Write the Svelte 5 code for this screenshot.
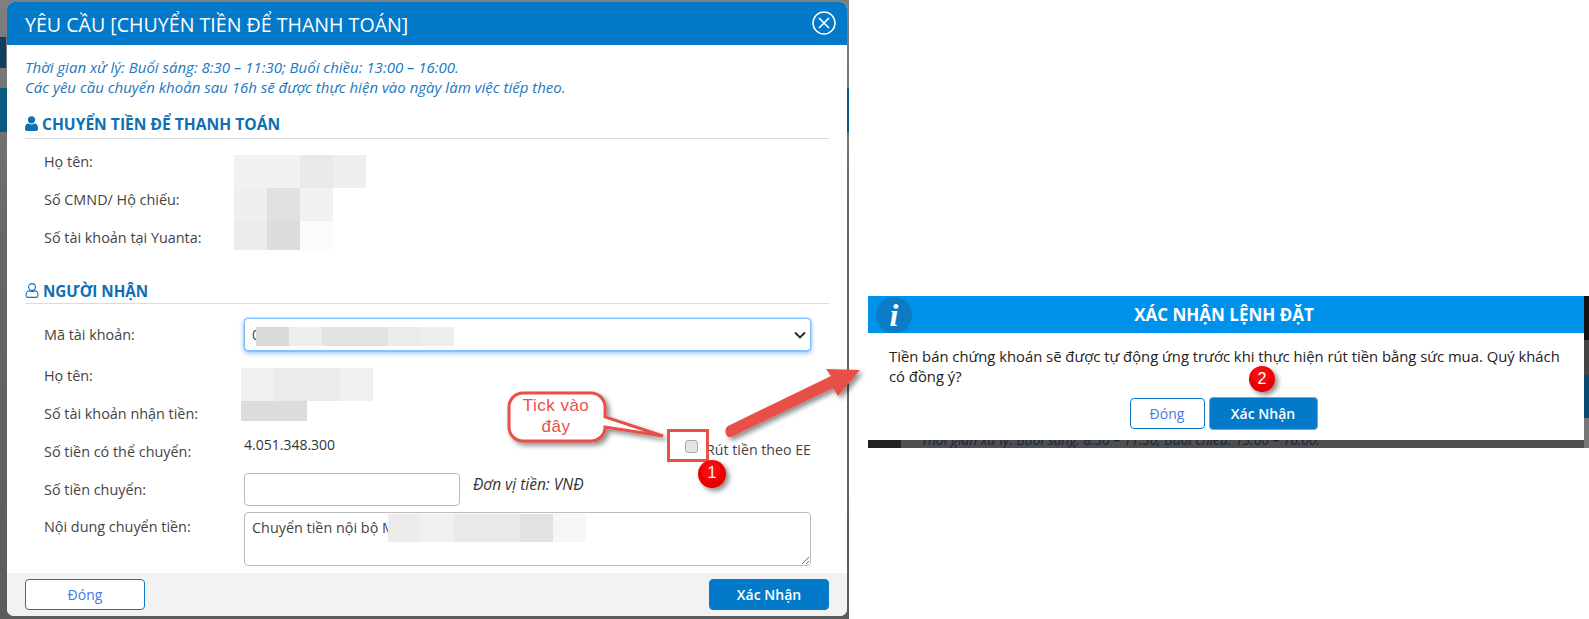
<script>
	const payerRows = ['Họ tên:', 'Số CMND/ Hộ chiếu:', 'Số tài khoản tại Yuanta:'];

	// pixelated patches that hide personal data in the screenshot
	const patches = [
		{ x: 234, y: 155, h: 33, w: 33, cells: ['#f1f1f1', '#f1f1f1', '#e9e9e9', '#eeeeee'] },
		{ x: 234, y: 188, h: 33, w: 33, cells: ['#efefef', '#e0e0e0', '#f1f1f1'] },
		{ x: 234, y: 221, h: 29, w: 33, cells: ['#ececec', '#dcdcdc', '#fbfbfb'] },
		{ x: 256, y: 327, h: 19, w: 33, cells: ['#dadada', '#eeeeee', '#e3e3e3', '#e3e3e3', '#ececec', '#eeeeee'] },
		{ x: 241, y: 368, h: 33, w: 33, cells: ['#f0f0f0', '#ebebeb', '#ebebeb', '#f0f0f0'] },
		{ x: 241, y: 401, h: 20, w: 66, cells: ['#dcdcdc'] },
		{ x: 388, y: 514, h: 28, w: 33, cells: ['#ececec', '#f0f0f0', '#e9e9e9', '#e9e9e9', '#e2e2e2', '#f6f6f6'] }
	];
</script>

<div class="page">
	<section class="backdrop">
		<div class="modal">
			<header class="modal-head">
				<h1>YÊU CẦU [CHUYỂN TIỀN ĐỂ THANH TOÁN]</h1>
				<svg class="close" width="24" height="24" viewBox="0 0 24 24" fill="none" stroke="#fff">
					<circle cx="12" cy="12" r="11" stroke-width="1.5" />
					<path d="M7 7l10 10M17 7L7 17" stroke-width="1.6" />
				</svg>
			</header>

			<div class="modal-body">
				<p class="note">Thời gian xử lý: Buổi sáng: 8:30 – 11:30; Buổi chiều: 13:00 – 16:00.</p>
				<p class="note">Các yêu cầu chuyển khoản sau 16h sẽ được thực hiện vào ngày làm việc tiếp theo.</p>

				<h2 class="section first">
					<svg width="13" height="15" viewBox="0 0 13 15" fill="#0e6fb5">
						<circle cx="6.5" cy="3.8" r="3.6" />
						<path d="M0 13c0-4 1.500-5.500 3.500-5.500 1 .7 2 1 3 1s2-.3 3-1c2 0 3.500 1.500 3.500 5.500 0 1.200-.8 2-2 2H2c-1.200 0-2-.8-2-2z" />
					</svg>
					CHUYỂN TIỀN ĐỂ THANH TOÁN
				</h2>
				{#each payerRows as label}
					<div class="row"><span class="label">{label}</span></div>
				{/each}

				<h2 class="section second">
					<svg width="14" height="15" viewBox="0 0 14 15" fill="none" stroke="#0e6fb5" stroke-width="1.1">
						<circle cx="7" cy="4" r="3.4" />
						<path d="M1 12.500c0-3 1.500-4.800 3.400-4.800 1.700 1 3.500 1 5.200 0 1.900 0 3.400 1.800 3.400 4.800 0 1-.7 1.900-1.800 1.900H2.800C1.700 14.400 1 13.500 1 12.500z" />
					</svg>
					NGƯỜI NHẬN
				</h2>

				<div class="row select-row">
					<span class="label">Mã tài khoản:</span>
					<div class="select-wrap">
						<select class="control account"><option>0</option></select>
						<svg class="chevron" width="12" height="8" viewBox="0 0 12 8" fill="none" stroke="#222" stroke-width="1.800">
							<path d="M1 1.500l5 5 5-5" />
						</svg>
					</div>
				</div>
				<div class="row"><span class="label">Họ tên:</span></div>
				<div class="row"><span class="label">Số tài khoản nhận tiền:</span></div>
				<div class="row">
					<span class="label">Số tiền có thể chuyển:</span>
					<span class="amount">4.051.348.300</span>
					<label class="ee">
						<input type="checkbox" />
						<span>Rút tiền theo EE</span>
					</label>
				</div>
				<div class="row">
					<span class="label">Số tiền chuyển:</span>
					<input class="control money" type="text" />
					<em class="unit">Đơn vị tiền: VNĐ</em>
				</div>
				<div class="row text-row">
					<span class="label">Nội dung chuyển tiền:</span>
					<textarea class="control content">Chuyển tiền nội bộ M</textarea>
				</div>
			</div>

			<footer class="modal-foot">
				<button class="btn ghost">Đóng</button>
				<button class="btn solid">Xác Nhận</button>
			</footer>
		</div>
	</section>

	<section class="confirm-shot">
		<div class="confirm">
			<header class="confirm-head">
				<span class="info">i</span>
				<h3>XÁC NHẬN LỆNH ĐẶT</h3>
			</header>
			<p class="confirm-text">Tiền bán chứng khoán sẽ được tự động ứng trước khi thực hiện rút tiền bằng sức mua. Quý khách có đồng ý?</p>
			<div class="confirm-actions">
				<button class="btn ghost small">Đóng</button>
				<button class="btn solid wide">Xác Nhận</button>
			</div>
		</div>
		<div class="under"><span>Thời gian xử lý: Buổi sáng: 8:30 – 11:30; Buổi chiều: 13:00 – 16:00.</span></div>
	</section>

	{#each patches as p}
		<div class="patch" style="left:{p.x}px;top:{p.y}px;height:{p.h}px">
			{#each p.cells as c}
				<i style="width:{p.w}px;background:{c}"></i>
			{/each}
		</div>
	{/each}

	<!-- red annotations drawn on top of the two screenshots -->
	<svg class="marks" width="1589" height="619" viewBox="0 0 1589 619">
		<defs>
			<filter id="shade" x="-20%" y="-20%" width="150%" height="150%">
				<feDropShadow dx="3" dy="3" stdDeviation="2.500" flood-color="#000" flood-opacity="0.45" />
			</filter>
			<radialGradient id="ball" cx="45%" cy="35%" r="70%">
				<stop offset="0" stop-color="#ff0d0d" />
				<stop offset="1" stop-color="#e00000" />
			</radialGradient>
		</defs>
		<path
			d="M523 393h68a14 14 0 0 1 14 14v10l58 19-58-9v0a14 14 0 0 1-14 14h-68a14 14 0 0 1-14-14v-20a14 14 0 0 1 14-14z"
			fill="#fff" stroke="#e9504a" stroke-width="3" filter="url(#shade)" />
		<rect x="668.500" y="430.500" width="39" height="30" fill="none" stroke="#e9504a" stroke-width="3" />
		<path d="M728 426l103-50-5-7 34 1-22 26-5-8-102 49c-5 2-8-8-3-11z" fill="#e9504a" filter="url(#shade)" />
		<circle cx="712" cy="474" r="14" fill="url(#ball)" filter="url(#shade)" />
		<circle cx="1262" cy="379" r="13" fill="url(#ball)" filter="url(#shade)" />
	</svg>

	<div class="callout-text">Tick vào<br />đây</div>
	<span class="badge one">1</span>
	<span class="badge two">2</span>
</div>

<style>
	:global(body) {
		margin: 0;
		background: #fff;
	}

	.page {
		position: relative;
		display: flex;
		width: 1589px;
		height: 619px;
		overflow: hidden;
		background: #fff;
		font-family: 'Open Sans', 'Noto Sans', sans-serif;
		font-size: 14.400px;
		color: #333;
	}

	p,
	h1,
	h2,
	h3 {
		margin: 0;
	}

	.backdrop {
		box-sizing: border-box;
		flex: none;
		width: 849px;
		height: 619px;
		padding: 2px 2px 3px 7px;
		background:
			linear-gradient(#0c3f60, #0c3f60) 0 37px / 6px 31px no-repeat,
			linear-gradient(#0a5b82, #0a5b82) 0 88px / 100% 44px no-repeat,
			linear-gradient(#7f7f7f, #666 40%, #5c5c5c);
	}

	.modal {
		display: flex;
		flex-direction: column;
		height: 100%;
		overflow: hidden;
		border-radius: 7px;
		background: #fff;
	}

	.modal-head {
		display: flex;
		flex: none;
		align-items: center;
		justify-content: space-between;
		height: 43px;
		padding: 0 11px 0 18px;
		background: #0279c9;
		color: #fff;
	}

	.modal-head h1 {
		padding-top: 2px;
		font-size: 19.600px;
		font-weight: 400;
	}

	.close {
		margin-top: -1px;
	}

	.modal-body {
		flex: 1;
		min-height: 0;
		padding: 12px 18px 0;
	}

	.note {
		font-size: 15px;
		font-style: italic;
		line-height: 20px;
		color: #1b78c0;
	}

	.section {
		display: flex;
		align-items: center;
		gap: 4px;
		box-sizing: border-box;
		height: 33px;
		border-bottom: 1px solid #dcdcdc;
		font-size: 15.600px;
		font-weight: 700;
		color: #0e6fb5;
	}

	.section.first {
		margin-top: 9px;
		margin-bottom: 3px;
		padding-top: 3px;
	}

	.section.second {
		margin-top: 15px;
		margin-bottom: 14px;
		padding-top: 7px;
		font-size: 15.200px;
	}

	.row {
		display: flex;
		align-items: center;
		height: 38px;
		margin-right: 18px;
	}

	.select-row {
		height: 33px;
		margin-bottom: 5px;
	}

	.text-row {
		align-items: flex-start;
		height: 54px;
		margin-top: 4px;
	}

	.text-row .label {
		margin-top: 5px;
	}

	.label {
		flex: none;
		box-sizing: border-box;
		width: 219px;
		padding-left: 19px;
		color: #444;
	}

	.control {
		box-sizing: border-box;
		border: 1px solid #bbb;
		border-radius: 4px;
		background: #fff;
		font: inherit;
		color: #444;
	}

	.select-wrap {
		position: relative;
		flex: 1;
		height: 33px;
	}

	.account {
		appearance: none;
		display: block;
		width: 100%;
		height: 33px;
		padding-left: 7px;
		border-color: #80bdff;
		box-shadow: 0 0 0 1px rgba(0, 123, 255, 0.15), 0 2px 5px rgba(0, 123, 255, 0.5);
	}

	.chevron {
		position: absolute;
		top: 13px;
		right: 5px;
	}

	.money {
		width: 216px;
		height: 33px;
	}

	.content {
		flex: 1;
		height: 54px;
		padding: 5px 7px;
	}

	.amount {
		padding-bottom: 13px;
		font-size: 14px;
		color: #333;
	}

	.ee {
		display: flex;
		align-items: center;
		gap: 8px;
		margin-left: auto;
		padding-bottom: 3px;
		font-size: 14.200px;
		color: #444;
	}

	.ee input {
		appearance: none;
		box-sizing: border-box;
		width: 13px;
		height: 13px;
		margin: 0 0 6px;
		border: 1px solid #aaa;
		border-radius: 3px;
		background: #e4e4e4;
	}

	.unit {
		margin-left: 13px;
		padding-bottom: 11px;
		font-size: 15.500px;
		color: #333;
	}

	.modal-foot {
		display: flex;
		flex: none;
		align-items: center;
		justify-content: space-between;
		height: 43px;
		padding: 0 18px;
		background: #f2f2f2;
	}

	.btn {
		box-sizing: border-box;
		width: 120px;
		height: 31px;
		padding: 0;
		border: 1px solid #0e78c8;
		border-radius: 4px;
		font: inherit;
		font-size: 14px;
	}

	.ghost {
		background: #fff;
		color: #4a78e8;
	}

	.solid {
		background: #0279c9;
		font-weight: 600;
		color: #fff;
	}

	.confirm-shot {
		flex: none;
		width: 721px;
		height: 152px;
		margin: 296px 0 0 19px;
		background:
			linear-gradient(#111 0, #111 44px, #444 44px, #444 79px, #0a4a70 79px, #0a4a70 122px, #777 122px) right top / 5px 100% no-repeat;
	}

	.confirm {
		width: 716px;
		height: 144px;
		background: #fff;
	}

	.confirm-head {
		position: relative;
		display: flex;
		align-items: center;
		justify-content: center;
		height: 37px;
		padding-right: 4px;
		background: #0091ea;
		color: #fff;
	}

	.confirm-head h3 {
		font-size: 17px;
		font-weight: 700;
	}

	.info {
		position: absolute;
		top: 1px;
		left: 8px;
		width: 36px;
		height: 36px;
		border-radius: 50%;
		background: #0c7bc5;
		font-family: 'Liberation Serif', serif;
		font-size: 32px;
		font-style: italic;
		font-weight: 700;
		line-height: 36px;
		text-align: center;
	}

	.confirm-text {
		height: 40px;
		padding: 13px 12px 0 21px;
		font-size: 14.800px;
		line-height: 20px;
		color: #222;
	}

	.confirm-actions {
		display: flex;
		align-items: center;
		justify-content: center;
		gap: 4px;
		margin: 11px 0 0 -5px;
	}

	.small {
		width: 75px;
	}

	.wide {
		width: 109px;
		height: 33px;
		border-color: #6aa9f0;
	}

	.under {
		box-sizing: border-box;
		width: 716px;
		height: 8px;
		overflow: hidden;
		padding-left: 20px;
		border-left: 33px solid #222;
		background: #4f4f4f;
		font-size: 13.800px;
		font-style: italic;
		line-height: 8px;
		color: #12263d;
		white-space: nowrap;
	}

	.under span {
		position: relative;
		top: -4px;
	}

	.patch {
		position: absolute;
		display: flex;
	}

	.patch i {
		display: block;
	}

	.marks {
		position: absolute;
		top: 0;
		left: 0;
		pointer-events: none;
	}

	.callout-text {
		position: absolute;
		top: 395px;
		left: 508px;
		width: 96px;
		font-family: 'Liberation Sans', sans-serif;
		font-size: 17px;
		letter-spacing: 0.5px;
		line-height: 21px;
		text-align: center;
		color: #e9504a;
	}

	.badge {
		position: absolute;
		width: 28px;
		font-family: 'Liberation Sans', sans-serif;
		font-size: 16px;
		line-height: 20px;
		text-align: center;
		color: #fff;
	}

	.badge.one {
		top: 463px;
		left: 698px;
	}

	.badge.two {
		top: 369px;
		left: 1248px;
	}
</style>
